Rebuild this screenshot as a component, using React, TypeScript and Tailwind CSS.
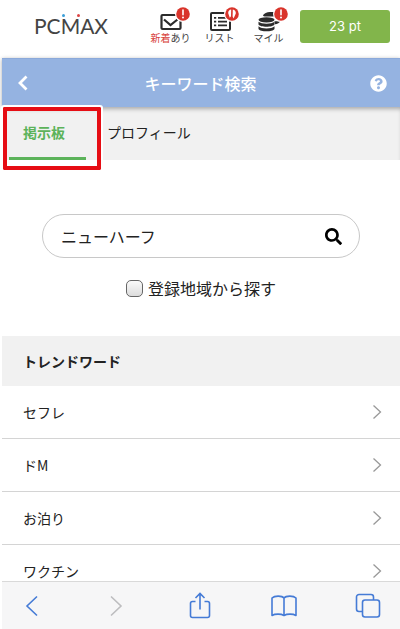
import { useState } from "react";
import type { ReactNode } from "react";
import { FaSearch, FaQuestionCircle } from "react-icons/fa";

const trendWords = ["セフレ", "ドM", "お泊り", "ワクチン"];

function Badge({ children }: { children: ReactNode }) {
  return (
    <svg viewBox="0 0 16 16" className="absolute -top-[6px] left-4 w-4 h-4" aria-hidden="true">
      <circle cx="8" cy="8" r="8" fill="#fff" />
      <circle cx="8" cy="8" r="6.8" fill="#d9342b" />
      {children}
    </svg>
  );
}

function AlertMark() {
  return (
    <>
      <path d="M8 4v4.8" stroke="#fff" strokeWidth="1.6" strokeLinecap="round" />
      <circle cx="8" cy="11.6" r="1" fill="#fff" />
    </>
  );
}

// Beginner's mark, two leaves
function LeafMark() {
  return (
    <path
      d="M7.2 3.4C5.4 3.6 4 5 4.2 7.2L5.8 11.8 7 10.2zM8.8 3.4c1.9.3 3.2 1.8 3 4L9.6 12.6 8.6 10.6z"
      fill="#fff"
    />
  );
}

function MenuItem({ icon, badge, children }: { icon: ReactNode; badge: ReactNode; children: ReactNode }) {
  return (
    <a href="#" className="w-[49px] flex flex-col items-center">
      <span className="relative w-6 h-5">
        {icon}
        <Badge>{badge}</Badge>
      </span>
      <span className="text-[10px] leading-3 whitespace-nowrap text-[#444]">{children}</span>
    </a>
  );
}

function Header() {
  return (
    <header className="h-[58px] shrink-0 flex items-start pr-[10px] bg-white">
      <a
        href="#"
        aria-label="PCMAX"
        className="relative ml-8 mt-3 font-['Lato'] text-[21px] leading-7 text-[#444]"
      >
        PCMAX
        <span className="absolute top-[2px] left-[28px] w-[3px] h-[3px] rounded-full bg-[#3b9fd8]" />
        <span className="absolute top-[2px] left-[43px] w-[3px] h-[3px] rounded-full bg-[#dd4545]" />
      </a>
      <nav className="ml-auto mr-[7px] mt-3 flex">
        <MenuItem
          badge={<AlertMark />}
          icon={
            <svg viewBox="0 0 24 20" className="w-6 h-5" fill="none" stroke="#2b2b2b" strokeWidth="2.2">
              <rect x="2.5" y="3" width="19" height="14" rx="1" />
              <path d="M5 7.5l6.5 5.5 7-5.5" />
            </svg>
          }
        >
          <span className="text-[#d8413a]">新着</span>あり
        </MenuItem>
        <MenuItem
          badge={<LeafMark />}
          icon={
            <svg viewBox="0 0 24 20" className="w-6 h-5" fill="none" stroke="#2b2b2b" strokeWidth="2">
              <rect x="3" y="1" width="19" height="17" rx="1" />
              <path d="M6 5.8h2.2M6 9.6h2.2M6 13.4h2.2M10 5.8h9M10 9.6h9M10 13.4h9" strokeWidth="1.8" />
            </svg>
          }
        >
          リスト
        </MenuItem>
        <MenuItem
          badge={<AlertMark />}
          icon={
            <svg viewBox="0 0 24 20" className="w-6 h-5" fill="#2b2b2b">
              <path d="M6 3.2C8-.4 15-.6 20 .6v4H9C7 4.4 6 4 6 3.2z" />
              <path d="M17.5 9.2H23c-.6 1.8-2.4 2.8-5 3z" />
              <ellipse cx="9.5" cy="7.8" rx="8" ry="2.6" />
              <path d="M1.500 9.8c3 2.6 13 2.6 16 0v2.6c-1.6 3-14.4 3-16 0z" />
              <path d="M1.500 14.3c3 3 13 3 16 0v2.6c-1.6 3.2-14.4 3.2-16 0z" />
            </svg>
          }
        >
          マイル
        </MenuItem>
      </nav>
      <button
        type="button"
        className="mt-[10px] w-[90px] h-[33px] rounded-[3px] bg-[#82b54b] text-white text-[13px] font-['Inter']"
      >
        23 pt
      </button>
    </header>
  );
}

function TitleBar() {
  return (
    <div className="relative z-10 h-[49px] shrink-0 flex items-center justify-between px-[13px] bg-[#95b3e1] border-t border-[#8ba9da] text-white shadow-[0_1px_4px_rgba(0,0,0,0.35)]">
      <button type="button" aria-label="戻る" className="w-4 h-5 flex items-center justify-center">
        <svg viewBox="0 0 12 16" className="w-3 h-4" fill="none" stroke="#fff" strokeWidth="2.8">
          <path d="M9.5 1.5L3 8l6.5 6.5" />
        </svg>
      </button>
      <h1 className="text-base font-medium">キーワード検索</h1>
      <button type="button" aria-label="ヘルプ">
        <FaQuestionCircle className="w-[17px] h-[17px]" />
      </button>
    </div>
  );
}

function Tabs() {
  return (
    <div className="relative z-20 h-[53px] shrink-0 flex text-sm">
      {/* inset shadow stands in for the title bar's, which this row covers */}
      <div className="flex-1 flex bg-[#f1f1f1] shadow-[inset_0_4px_4px_-2px_rgba(0,0,0,0.3)]">
        <button
          type="button"
          className="ml-[7px] w-[77px] pl-[14px] text-left border-b-[3px] border-[#5cb35a] text-[#5cb35a] font-bold"
        >
          掲示板
        </button>
        <button type="button" className="ml-[21px] border-b-[3px] border-transparent text-[#222]">
          プロフィール
        </button>
      </div>
      {/* callout round the active tab */}
      <div className="absolute top-0 left-[1px] w-[98px] h-[63px] border-4 border-[#e60d14] outline-2 outline-white rounded-[1px] pointer-events-none" />
    </div>
  );
}

function SearchForm() {
  const [keyword, setKeyword] = useState("ニューハーフ");
  const [local, setLocal] = useState(false);

  return (
    <form className="pt-[54px] pb-9 px-10" onSubmit={(e) => e.preventDefault()}>
      <div className="h-[44px] flex items-center rounded-full border border-[#c8c8c8] pl-[18px] pr-[17px]">
        <input
          type="text"
          aria-label="キーワード"
          value={keyword}
          onChange={(e) => setKeyword(e.target.value)}
          className="flex-1 min-w-0 text-base text-[#222] outline-none"
        />
        <button type="submit" aria-label="検索">
          <FaSearch className="w-[17px] h-[17px] text-black" />
        </button>
      </div>
      <label className="mt-[18px] flex items-center justify-center gap-[5px] text-base leading-6 text-[#222]">
        <input
          type="checkbox"
          checked={local}
          onChange={(e) => setLocal(e.target.checked)}
          className="appearance-none w-[17px] h-[17px] rounded-[5px] border border-[#666] bg-linear-to-b from-[#fafafa] to-[#dcdcdc] checked:from-[#7aa7ee] checked:to-[#3a78d8]"
        />
        登録地域から探す
      </label>
    </form>
  );
}

function TrendWords() {
  return (
    <section>
      <h2 className="h-[50px] flex items-center pl-[21px] bg-[#f1f1f1] text-sm font-bold text-[#222]">
        トレンドワード
      </h2>
      <ul>
        {trendWords.map((word) => (
          <li key={word}>
            <a
              href="#"
              className="h-[53px] flex items-center justify-between pl-[21px] pr-[18px] border-b border-[#d4d4d4] text-sm text-[#222]"
            >
              {word}
              <svg viewBox="0 0 10 16" className="w-[10px] h-4" fill="none" stroke="#999" strokeWidth="1.3">
                <path d="M1.5 1.5L8.5 8l-7 6.5" />
              </svg>
            </a>
          </li>
        ))}
      </ul>
    </section>
  );
}

function BarButton({ label, disabled, children }: { label: string; disabled?: boolean; children: ReactNode }) {
  return (
    <button type="button" aria-label={label} disabled={disabled} className="w-7 h-7 disabled:text-[#bdbdbf]">
      <svg viewBox="0 0 28 28" className="w-7 h-7" fill="none" stroke="currentColor" strokeWidth="1.6">
        {children}
      </svg>
    </button>
  );
}

function BrowserBar() {
  return (
    <nav className="h-12 shrink-0 flex items-center justify-between pl-4 pr-[18px] bg-[#f6f6f7] border-t border-[#d9d9d9] text-[#457bd6]">
      <BarButton label="前のページ">
        <path d="M19 4.500L9 14l10 9.5" />
      </BarButton>
      <BarButton label="次のページ" disabled>
        <path d="M9 4.500L19 14 9 23.5" />
      </BarButton>
      <BarButton label="共有">
        <path d="M9.5 9.5h-3a2 2 0 0 0-2 2v12a2 2 0 0 0 2 2h15a2 2 0 0 0 2-2v-12a2 2 0 0 0-2-2h-3M14 17.5v-16M9.5 6L14 1.500 18.5 6" />
      </BarButton>
      <BarButton label="ブックマーク">
        <path
          d="M14 6C12 3.5 4.5 3.5 2 6v17.5c3-1.8 9-1.8 12 0zM14 6c2-2.5 9.5-2.5 12 0v17.5c-3-1.8-9-1.8-12 0z"
          strokeLinejoin="round"
        />
      </BarButton>
      <BarButton label="タブ一覧">
        <path d="M8.5 19.5H5A2.5 2.5 0 0 1 2.5 17V5A2.5 2.5 0 0 1 5 2.5h12A2.5 2.5 0 0 1 19.5 5v3" />
        <rect x="8.5" y="8" width="17" height="17" rx="2.5" />
      </BarButton>
    </nav>
  );
}

export default function App() {
  return (
    <div className="h-screen flex flex-col pl-[2px] bg-white font-['Noto_Sans_CJK_JP',sans-serif]">
      <Header />
      <TitleBar />
      <Tabs />
      <main className="flex-1 min-h-0 overflow-y-auto [scrollbar-width:none]">
        <SearchForm />
        <TrendWords />
      </main>
      <BrowserBar />
    </div>
  );
}
